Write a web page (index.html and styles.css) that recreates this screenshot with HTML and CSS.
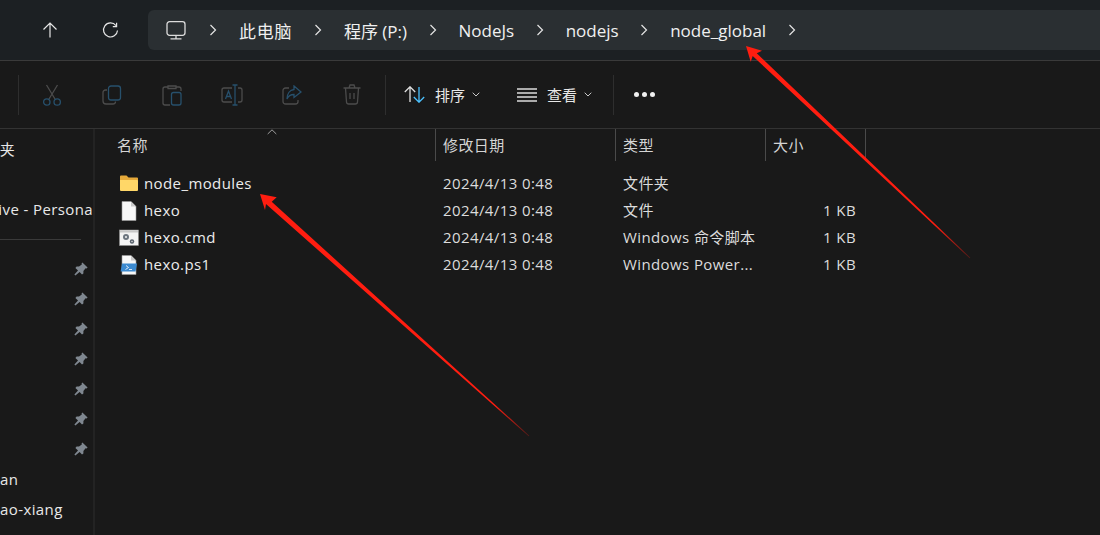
FILE: index.html
```html
<!DOCTYPE html>
<html lang="zh-CN">
<head>
  <meta charset="UTF-8">
  <meta name="viewport" content="width=device-width, initial-scale=1.0">
  <title>node_global</title>
  <link rel="stylesheet" href="styles.css">
</head>
<body>
  <svg class="defs" width="0" height="0">
    <symbol id="pin" viewBox="0 0 14 14">
      <path d="M8.4 0.4 13.6 5.6 12.6 6.4 11.6 6.2 9.4 9 9.4 11.4 8 12.6 5.6 10 1.4 13.6 0.4 12.6 4 8.4 1.4 6 2.6 4.6 5 4.6 7.8 2.4 7.6 1.4Z" fill="#7f8790"/>
    </symbol>
    <symbol id="chev" viewBox="0 0 8 12">
      <path d="M1.5 1 6.5 6 1.5 11" fill="none" stroke="#e4e4e4" stroke-width="1.2"/>
    </symbol>
    <symbol id="caret" viewBox="0 0 8 5">
      <path d="M0.7 0.7 4 4 7.3 0.7" fill="none" stroke="#c8c8c8" stroke-width="1"/>
    </symbol>
  </svg>

  <div class="topbar">
    <div class="nav-btn">
      <svg width="16" height="16" viewBox="0 0 16 16"><path d="M8 15.5V1M1.5 7.5 8 1l6.5 6.5" fill="none" stroke="#e6e6e6" stroke-width="1.2"/></svg>
    </div>
    <div class="nav-btn">
      <svg width="17" height="17" viewBox="0 0 17 17"><path d="M14 3.6A7 7 0 1 0 15.5 8.5" fill="none" stroke="#e6e6e6" stroke-width="1.2"/><path d="M14.6 0.8V4.6H10.8" fill="none" stroke="#e6e6e6" stroke-width="1.2"/></svg>
    </div>
    <div class="address">
      <svg class="pc-icon" width="20" height="19" viewBox="0 0 20 19"><rect x="1" y="0.7" width="18" height="13.6" rx="2.5" fill="none" stroke="#dcdcdc" stroke-width="1.3"/><path d="M10 14.5V17.6M4.5 17.8H15.5" fill="none" stroke="#dcdcdc" stroke-width="1.3"/></svg>
      <svg class="chev"><use href="#chev"/></svg>
      <span class="crumb wide">此电脑</span>
      <svg class="chev"><use href="#chev"/></svg>
      <span class="crumb">程序 (P:)</span>
      <svg class="chev"><use href="#chev"/></svg>
      <span class="crumb">NodeJs</span>
      <svg class="chev"><use href="#chev"/></svg>
      <span class="crumb">nodejs</span>
      <svg class="chev"><use href="#chev"/></svg>
      <span class="crumb">node_global</span>
      <svg class="chev"><use href="#chev"/></svg>
    </div>
  </div>

  <div class="toolbar">
    <div class="sep first"></div>
    <div class="tool">
      <svg width="20" height="22" viewBox="0 0 20 22" fill="none" stroke-width="1.3"><path d="M4.5 1 13 15M15.5 1 7 15" stroke="#4c4c4c"/><circle cx="4.8" cy="18" r="3.2" stroke="#27506c"/><circle cx="15.2" cy="18" r="3.2" stroke="#27506c"/></svg>
    </div>
    <div class="tool">
      <svg width="20" height="20" viewBox="0 0 20 20" fill="none" stroke-width="1.3"><path d="M5 5H3.5A2.5 2.5 0 0 0 1 7.5V16A3 3 0 0 0 4 19H11A2.5 2.5 0 0 0 13.5 16.5" stroke="#4c4c4c"/><rect x="6.5" y="1" width="12" height="14" rx="2.5" stroke="#27506c"/></svg>
    </div>
    <div class="tool">
      <svg width="20" height="22" viewBox="0 0 20 22" fill="none" stroke-width="1.3"><path d="M6 3H3A2 2 0 0 0 1 5V19A2 2 0 0 0 3 21H8M14 3H17A2 2 0 0 1 19 5V7M6 2H14V4.5H6Z" stroke="#4c4c4c"/><rect x="9.500" y="8.500" width="9.500" height="12.500" rx="2" stroke="#27506c"/></svg>
    </div>
    <div class="tool">
      <svg width="22" height="22" viewBox="0 0 22 22" fill="none" stroke-width="1.3"><path d="M11 4H3A2 2 0 0 0 1 6V16A2 2 0 0 0 3 18H11M17 4H19A2 2 0 0 1 21 6V16A2 2 0 0 1 19 18H17" stroke="#4c4c4c"/><path d="M14 1V21M11.500 1H16.500M11.500 21H16.500M4.500 15 7.500 7 10.500 15M5.500 12.500H9.500" stroke="#27506c"/></svg>
    </div>
    <div class="tool">
      <svg width="20" height="20" viewBox="0 0 20 20" fill="none" stroke-width="1.3"><path d="M7 3H3.500A2.500 2.500 0 0 0 1 5.500V16.500A2.500 2.500 0 0 0 3.500 19H13.500A2.500 2.500 0 0 0 16 16.500V15" stroke="#4c4c4c"/><path d="M12 1 19 7 12 12.500V9.500C8.500 9.500 6.500 10.500 5 14 5 8.500 8 5 12 4.500Z" stroke="#27506c"/></svg>
    </div>
    <div class="tool">
      <svg width="18" height="21" viewBox="0 0 18 21" fill="none" stroke="#4c4c4c" stroke-width="1.3"><path d="M0.500 4H17.500M6 4 7 1H11L12 4M2.500 4 3.500 18A2.200 2.200 0 0 0 5.700 20H12.300A2.200 2.200 0 0 0 14.500 18L15.500 4M7 9V15M11 9V15"/></svg>
    </div>
    <div class="sep"></div>
    <div class="menu sort">
      <svg width="21" height="17" viewBox="0 0 21 17" fill="none" stroke-width="1.3"><path d="M6 16V1M0.800 6 6 0.800 11.200 6" stroke="#e0e0e0"/><path d="M15 1V16M9.800 11 15 16.200 20.200 11" stroke="#4cc2ff"/></svg>
      <span>排序</span>
      <svg class="caret"><use href="#caret"/></svg>
    </div>
    <div class="menu view">
      <svg width="20" height="14" viewBox="0 0 20 14" fill="none" stroke="#dcdcdc" stroke-width="1.3"><path d="M0 1H20M0 5H20M0 9H20M0 13H20"/></svg>
      <span>查看</span>
      <svg class="caret"><use href="#caret"/></svg>
    </div>
    <div class="sep"></div>
    <div class="more"><i></i><i></i><i></i></div>
  </div>

  <div class="main">
    <div class="sidebar">
      <div class="side-row first">文件夹</div>
      <div class="side-row gap">OneDrive - Personal</div>
      <div class="side-divider"></div>
      <div class="side-pin"><svg><use href="#pin"/></svg></div>
      <div class="side-pin"><svg><use href="#pin"/></svg></div>
      <div class="side-pin"><svg><use href="#pin"/></svg></div>
      <div class="side-pin"><svg><use href="#pin"/></svg></div>
      <div class="side-pin"><svg><use href="#pin"/></svg></div>
      <div class="side-pin"><svg><use href="#pin"/></svg></div>
      <div class="side-pin"><svg><use href="#pin"/></svg></div>
      <div class="side-row">an</div>
      <div class="side-row">ao-xiang</div>
    </div>
    <div class="filelist">
      <div class="list-head">
        <div class="col name">名称<svg class="sort-caret" width="10" height="6" viewBox="0 0 10 6"><path d="M0.700 5 5 0.800 9.300 5" fill="none" stroke="#a0a0a0"/></svg></div>
        <div class="col">修改日期</div>
        <div class="col">类型</div>
        <div class="col">大小</div>
      </div>
      <div class="file-row">
        <div class="file-name">
          <svg class="file-icon" width="20" height="18" viewBox="0 0 20 18"><path d="M1 1.500A1 1 0 0 1 2 0.500H7.500L9.500 2.500H18A1 1 0 0 1 19 3.500V6H1Z" fill="#e5a93a"/><path d="M1 5H18A1 1 0 0 1 19 6V15A1 1 0 0 1 18 16H2A1 1 0 0 1 1 15Z" fill="#ffd768"/></svg>
          node_modules
        </div>
        <div>2024/4/13 0:48</div>
        <div>文件夹</div>
        <div class="size"></div>
      </div>
      <div class="file-row">
        <div class="file-name">
          <svg class="file-icon" width="20" height="20" viewBox="0 0 20 20"><path d="M3 0.500H12L17 5.500V19.500H3Z" fill="#f7f7f7" stroke="#9a9a9a" stroke-width="0.600"/><path d="M12 0.500V5.500H17Z" fill="#c9c9c9"/></svg>
          hexo
        </div>
        <div>2024/4/13 0:48</div>
        <div>文件</div>
        <div class="size">1 KB</div>
      </div>
      <div class="file-row">
        <div class="file-name">
          <svg class="file-icon" width="20" height="20" viewBox="0 0 20 20"><rect x="0.500" y="2" width="19" height="15.500" fill="#f3f3f3" stroke="#8c8c8c" stroke-width="0.600"/><rect x="1" y="2.500" width="18" height="2" fill="#c8c8c8"/><circle cx="7" cy="9" r="3" fill="#6d7680"/><circle cx="7" cy="9" r="1" fill="#f3f3f3"/><circle cx="13" cy="13.500" r="2.200" fill="#59626c"/><circle cx="13" cy="13.500" r="0.700" fill="#f3f3f3"/></svg>
          hexo.cmd
        </div>
        <div>2024/4/13 0:48</div>
        <div>Windows 命令脚本</div>
        <div class="size">1 KB</div>
      </div>
      <div class="file-row">
        <div class="file-name">
          <svg class="file-icon" width="20" height="20" viewBox="0 0 20 20"><path d="M3 0.500H12L17 5.500V19.500H3Z" fill="#f7f7f7" stroke="#9a9a9a" stroke-width="0.600"/><path d="M12 0.500V5.500H17Z" fill="#c9c9c9"/><path d="M3 8.500H18L16.500 16.500H1.500Z" fill="#3c8ad0"/><path d="M7 10.500 9.500 12.500 6.500 14.500M10 14.500H13" fill="none" stroke="#eaf4ff" stroke-width="0.900"/></svg>
          hexo.ps1
        </div>
        <div>2024/4/13 0:48</div>
        <div>Windows Power...</div>
        <div class="size">1 KB</div>
      </div>
    </div>
  </div>

  <!-- red annotation arrows drawn over the screenshot -->
  <svg class="arrows" width="1100" height="535" viewBox="0 0 1100 535">
    <defs>
      <linearGradient id="fade1" gradientUnits="userSpaceOnUse" x1="935" y1="225" x2="970" y2="258">
        <stop offset="0" stop-color="#ff1d10"/>
        <stop offset="1" stop-color="#ff1d10" stop-opacity="0.25"/>
      </linearGradient>
      <linearGradient id="fade2" gradientUnits="userSpaceOnUse" x1="495" y1="405" x2="529" y2="436">
        <stop offset="0" stop-color="#ff1d10"/>
        <stop offset="1" stop-color="#ff1d10" stop-opacity="0.25"/>
      </linearGradient>
    </defs>
    <path d="M746 46 762 50.700 756.700 53.300 970.300 257.700 969.700 258.300 752.700 56 750.700 61.700Z" fill="url(#fade1)"/>
    <path d="M260 194 276.700 197.300 271.700 201.700 529.300 435.700 528.700 436.300 266 204 265 210Z" fill="url(#fade2)"/>
  </svg>
</body>
</html>
```
FILE: styles.css
```css
/* General Styles */
html, body {
  margin: 0;
  padding: 0;
}

body {
  position: relative;
  width: 1100px;
  height: 535px;
  overflow: hidden;
  background: #191919;
  color: #e8e8e8;
  font-family: "Open Sans", "Noto Sans CJK SC", sans-serif;
  font-size: 15px;
  letter-spacing: 0.4px;
}

.defs {
  position: absolute;
}

/* Top bar */
.topbar {
  display: flex;
  align-items: center;
  box-sizing: border-box;
  height: 61px;
  padding-left: 20px;
  background: #1c2023;
  border-bottom: 1px solid #3a3a3a;
}

.nav-btn {
  display: flex;
  justify-content: center;
  align-items: center;
  width: 60px;
}

.address {
  display: flex;
  align-items: center;
  flex: 1;
  height: 40px;
  margin-left: 8px;
  padding-left: 18px;
  background: #2a2f32;
  border-radius: 6px 0 0 6px;
  font-size: 17px;
  letter-spacing: 0;
  color: #f0f0f0;
}

.pc-icon {
  margin-right: 23px;
}

.chev {
  width: 8px;
  height: 12px;
}

.crumb {
  margin: 0 21.5px 0 22px;
}

.crumb.wide {
  letter-spacing: 0.8px;
}

/* Toolbar */
.toolbar {
  display: flex;
  align-items: center;
  height: 67px;
  padding-left: 18px;
  border-bottom: 1px solid #333;
}

.sep {
  width: 1px;
  height: 40px;
  margin: 0 3px;
  background: #2e2e2e;
}

.sep.first {
  margin-left: 0;
}

.tool {
  display: flex;
  justify-content: center;
  align-items: center;
  width: 60px;
}

.menu {
  display: flex;
  align-items: center;
  letter-spacing: 0;
}

.menu span {
  margin: 0 7px 0 10px;
}

.sort {
  margin-left: 15px;
  width: 113px;
}

.view {
  width: 93px;
}

.caret {
  width: 8px;
  height: 5px;
}

.more {
  display: flex;
  gap: 3px;
  margin-left: 17px;
}

.more i {
  width: 5px;
  height: 5px;
  border-radius: 50%;
  background: #f0f0f0;
}

/* Main */
.main {
  display: flex;
  height: 406px;
}

.sidebar {
  width: 93px;
  padding-top: 5px;
  border-right: 2px solid #232323;
  overflow: hidden;
  white-space: nowrap;
}

.side-row {
  height: 30px;
  line-height: 30px;
}

.side-row.first {
  margin-left: -31px;
}

.side-row.gap {
  margin: 30px 0 0 -50px;
}

.side-divider {
  width: 81px;
  height: 1px;
  margin: 15px 0 14px;
  background: #3a3a3a;
}

.side-pin {
  display: flex;
  justify-content: flex-end;
  align-items: center;
  height: 30px;
  padding-right: 5px;
}

.side-pin svg {
  width: 14px;
  height: 14px;
}

.filelist {
  flex: 1;
}

.list-head,
.file-row {
  display: grid;
  grid-template-columns: 341px 180px 150px 100px;
}

.list-head {
  height: 32px;
  margin-bottom: 9px;
  color: #d4d4d4;
}

.col {
  position: relative;
  padding-left: 7px;
  line-height: 32px;
  border-right: 1px solid #4a4a4a;
}

.col.name {
  padding-left: 22px;
}

.sort-caret {
  position: absolute;
  left: 172px;
  top: 0;
}

.file-row {
  height: 27px;
  line-height: 27px;
  color: #dcdcdc;
}

.file-row > div {
  padding-left: 7px;
  white-space: nowrap;
}

.file-row > .file-name {
  display: flex;
  align-items: center;
  padding-left: 24px;
  color: #ececec;
}

.file-icon {
  margin-right: 5px;
}

.file-row > .size {
  padding: 0 10px 0 0;
  text-align: right;
}

.arrows {
  position: absolute;
  left: 0;
  top: 0;
}
```
